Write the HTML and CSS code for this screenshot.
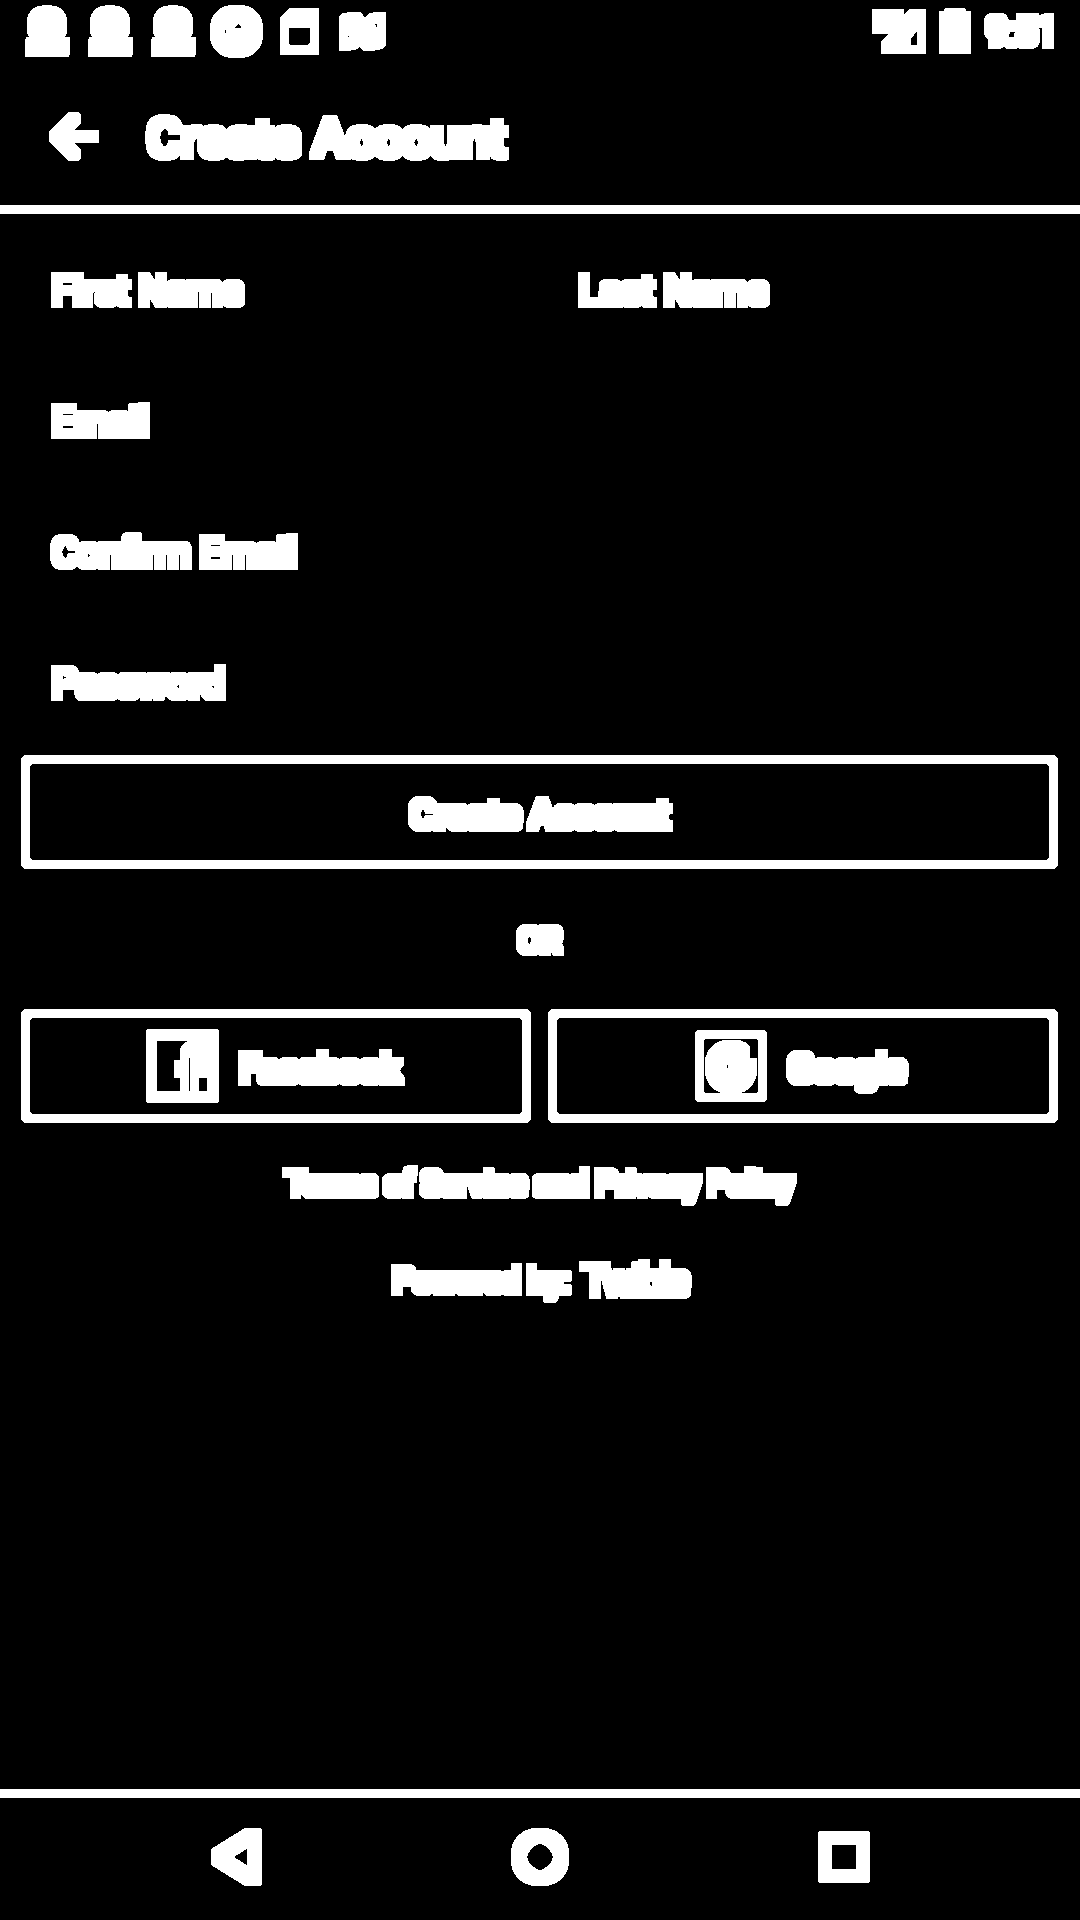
FILE: index.html
```html
<!DOCTYPE html>
<html lang="en">
<head>
<meta charset="utf-8">
<title>Create Account</title>
<link rel="stylesheet" href="styles.css">
</head>
<body>
<svg class="defs" aria-hidden="true">
  <filter id="heavy" x="-20%" y="-20%" width="140%" height="140%">
    <feComponentTransfer><feFuncA type="discrete" tableValues="0 0 1 1 1"/></feComponentTransfer>
    <feMorphology operator="dilate" radius="4"/>
  </filter>
  <symbol id="person" viewBox="0 0 45 66"><path d="M6 25A16 15.500 0 0 1 38 25Q38 31 35 34V41H41V47L40 53H4V47L5 41H9V34Q6 31 6 25z"/></symbol>
</svg>
<div class="screen">
  <header class="status">
    <div class="notices">
      <svg class="icon" width="45" height="66"><use href="#person"/></svg>
      <svg class="icon" width="45" height="66"><use href="#person"/></svg>
      <svg class="icon" width="45" height="66"><use href="#person"/></svg>
      <svg class="icon disc" width="53" height="66" viewBox="0 0 53 66"><path fill-rule="evenodd" d="M4 31.500a22.500 22.500 0 1 0 45 0a22.500 22.500 0 1 0-45 0M11 26h9v11h-9zM21 32v-9l4-4h7l3 4v9H21z"/></svg>
      <svg class="icon card" width="39" height="66" viewBox="0 0 39 66"><path fill-rule="evenodd" d="M4 22L14 12H34L35 13V50L34 51H5L4 50zM5 24V48L7 49H32L34 47V24z"/></svg>
      <svg class="icon wave" width="47" height="66" viewBox="0 0 47 66"><path fill-rule="evenodd" d="M4 20L8 17L17 16L20 19L26 29L32 19L35 17L42 16L43 17V42L39 45L29 47L25 43L21 37L15 45L5 47L4 46zM5 30V43H13L15 38V34L12 30zM32 20V28L34 32H42V20z"/></svg>
    </div>
    <div class="system">
      <svg class="icon" width="54" height="66" viewBox="0 0 54 66"><path fill-rule="evenodd" d="M4 13H28V27L42 13H50V50H13V46L28 30H4zM35 35V49H49V20H46zM22 49H34V36L30 37L22 44z"/></svg>
      <svg class="icon" width="32" height="66" viewBox="0 0 32 66"><path fill-rule="evenodd" d="M4 15H9L10 12H22L23 15H28V50H4zM16 49H27V36H24L16 44z"/></svg>
      <span class="clock">9:51</span>
    </div>
  </header>
  <div class="appbar">
    <svg class="icon" width="63" height="63" viewBox="0 0 24 24"><path d="M20 11H7.830l5.590-5.590L12 4l-8 8 8 8 1.410-1.410L7.830 13H20z"/></svg>
    <h1>Create Account</h1>
  </div>
  <main>
    <div class="row"><span class="field">First Name</span><span class="field">Last Name</span></div>
    <div class="row"><span class="field">Email</span></div>
    <div class="row"><span class="field">Confirm Email</span></div>
    <div class="row"><span class="field">Password</span></div>
    <div class="button primary"><span>Create Account</span></div>
    <p class="or"><span>OR</span></p>
    <div class="social">
      <div class="button facebook">
        <svg class="icon" width="73" height="74" viewBox="0 0 73 74"><path fill-rule="evenodd" d="M6 4H67L69 6V68L67 70H6L4 68V6zM7 8V66H65V8z"/><path class="line" d="M38.500 67V44.500H32.500V35.500H38.500V28Q38.500 16.500 49 16.500H65M65 26.500H52Q48.500 26.500 48.500 30V35.500H65M65 44.500H48.500V67M46 20H64M58 39H64M55 20V40M64 18V42"/></svg>
        <span>Facebook</span>
      </div>
      <div class="button google">
        <svg class="icon" width="72" height="72" viewBox="0 0 72 72"><path class="line" d="M6.500 4.500H65.500L67.500 6.500V65.500L65.500 67.500H6.500L4.500 65.500V6.500z"/><path fill-rule="evenodd" d="M51 20A22 23 0 1 0 58 37V32H51V30H45L51 25zM26 36L30 27H37V46H30z"/><path d="M31 55H42V66H31z"/></svg>
        <span>Google</span>
      </div>
    </div>
    <p class="terms"><span>Terms of Service and Privacy Policy</span></p>
    <p class="powered"><span>Powered by:</span><b>Twible</b></p>
  </main>
  <nav>
    <svg class="icon" width="51" height="58" viewBox="0 0 51 58"><path fill-rule="evenodd" d="M4 25L38 4H46L47 6V52L46 54H38L4 33zM40 12V46L12 29z"/></svg>
    <svg class="icon" width="58" height="58" viewBox="0 0 58 58"><path fill-rule="evenodd" d="M4 29a25 25 0 1 0 50 0a25 25 0 1 0-50 0M11.500 29a17.500 17.500 0 1 1 35 0a17.500 17.500 0 1 1-35 0"/></svg>
    <svg class="icon" width="52" height="52" viewBox="0 0 52 52"><path fill-rule="evenodd" d="M6 4H46L48 6V46L46 48H6L4 46V6zM10 10V42H42V10z"/></svg>
  </nav>
</div>
</body>
</html>
```
FILE: styles.css
```css
* { box-sizing: border-box; margin: 0; padding: 0; }
body { background: #000; color: #fff; font: 39px Roboto, sans-serif; }
.defs { position: absolute; width: 0; height: 0; }
.screen { width: 1080px; height: 1920px; display: flex; flex-direction: column; overflow: hidden; }
.icon { display: block; flex: none; fill: #fff; overflow: visible; }
.line { fill: none; stroke: #fff; stroke-width: 1; }
.icon, span, h1, b { filter: url(#heavy); white-space: nowrap; }

.status { height: 66px; display: flex; justify-content: space-between; padding: 0 20px 0 25px; }
.notices, .system { display: flex; }
.notices { gap: 18px; }
.disc { margin-left: -4px; }
.card { margin-left: -1px; }
.wave { margin-left: 2px; }
.system { gap: 13px; }
.clock { line-height: 64px; width: 76px; padding-left: 2px; letter-spacing: -1.1px; }

.appbar { height: 148px; border-bottom: 9px solid #fff; display: flex; padding: 39px 0 0 42px; gap: 42px; }
h1 { font-size: 52px; font-weight: 500; line-height: 68px; }

main { flex: 1; padding: 11px 22px 0 21px; }
.row { height: 131px; display: flex; line-height: 133px; }
.field { flex: none; width: 527px; padding-left: 31px; }
.row .field + .field { width: 480px; }
.button { position: relative; height: 114px; border: 9px solid transparent; display: flex; align-items: center; font-weight: 500; }
.button::before { content: ""; position: absolute; inset: -5px; border: 1px solid #fff; border-radius: 5px; filter: url(#heavy); }
.button span { padding-top: 6px; letter-spacing: -0.5px; }
.primary { margin-top: 6px; justify-content: center; }
.primary span { letter-spacing: -0.7px; }
.or { height: 140px; line-height: 144px; font-size: 33px; text-align: center; }
.or span, .terms span { display: inline-block; }
.social { display: grid; grid-template-columns: 1fr 1fr; gap: 17px; font-size: 38px; }
.facebook { padding-left: 116px; gap: 20px; }
.google { padding-left: 138px; gap: 21px; }
.terms { margin-top: 35px; font-size: 33px; line-height: 52px; text-align: center; letter-spacing: -0.38px; }
.powered { display: flex; justify-content: center; margin-top: 44px; font-size: 33px; line-height: 54px; gap: 13px; }
.powered span { letter-spacing: -0.2px; }
.powered b { font-size: 42px; font-weight: 400; letter-spacing: -3px; }

nav { height: 131px; border-top: 9px solid #fff; display: flex; align-items: center; justify-content: space-between; padding: 0 210px 5px 211px; }
```
